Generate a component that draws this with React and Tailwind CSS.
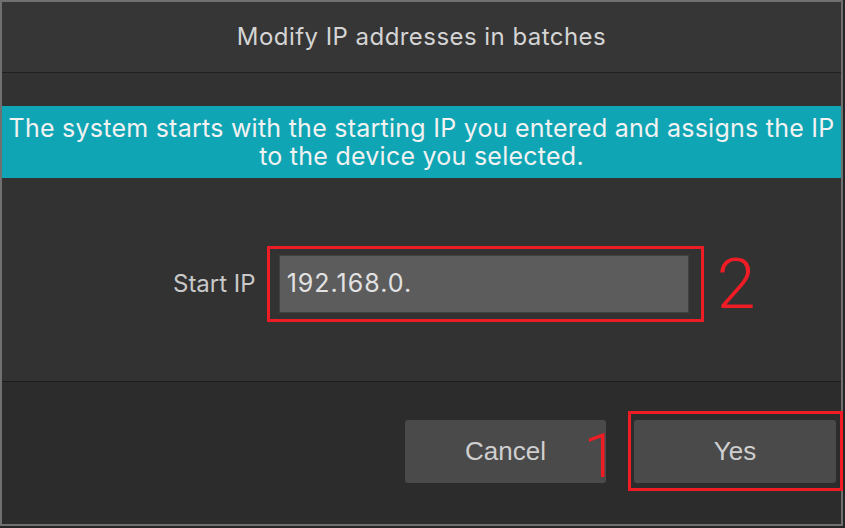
export default function App() {
  return (
    <div className="w-[845px] h-[528px] bg-[#262626] overflow-hidden">
      <div className="w-[843px] h-[526px] border-2 border-[#707070] bg-[#323232] flex flex-col" style={{ fontFamily: 'Inter, Roboto, "Noto Sans", sans-serif' }}>
        <div className="h-[71px] shrink-0 bg-[#363636] border-b border-[#1f1f1f] flex items-center justify-center">
          <span className="text-[24px] text-[#d4d4d4] tracking-[0.45px]">Modify IP addresses in batches</span>
        </div>
        <div className="h-[308px] shrink-0 pt-[33px] flex flex-col">
          <div className="h-[72px] bg-[#0fa5b4] flex flex-col items-center justify-center text-[25px] leading-[28px] text-[#f2f2f2] tracking-[0.25px]">
            <span>The system starts with the starting IP you entered and assigns the IP</span>
            <span>to the device you selected.</span>
          </div>
          <div className="mt-[68px] flex items-center pl-[171px]">
            <span className="text-[24px] text-[#c9c9c9]">Start IP</span>
            <div className="ml-[11px] border-[3px] border-[#ee1c25] pl-[9px] pr-[12px] py-[6px]">
              <div className="w-[410px] h-[58px] bg-[#5c5c5c] border border-[#404040] flex items-center pl-[7px]">
                <span className="text-[25px] text-[#e2e2e2] tracking-[1px]">192.168.0.</span>
              </div>
            </div>
            <span className="ml-[13px] text-[70px] leading-none text-[#ee1c25] font-light" style={{ fontFamily: 'Roboto, sans-serif' }}>2</span>
          </div>
        </div>
        <div className="flex-1 bg-[#2c2c2c] border-t border-[#1c1c1c] flex items-center justify-end pb-[4px]">
          <div className="relative">
            <button className="w-[201px] h-[63px] rounded-[3px] bg-[#4a4a4a] text-[26px] text-[#cfcfcf]" style={{ fontFamily: '"Liberation Sans", Arial, sans-serif' }}>Cancel</button>
            <span className="absolute right-[-12px] top-[5px] text-[62px] leading-none text-[#ee1c25] font-light" style={{ fontFamily: 'Roboto, sans-serif' }}>1</span>
          </div>
          <div className="ml-[22px] mr-[-2px] border-[3px] border-[#ee1c25] pl-[3px] pr-[4px] pt-[6px] pb-[5px]">
            <button className="w-[202px] h-[63px] rounded-[3px] bg-[#4a4a4a] text-[26px] text-[#cfcfcf]" style={{ fontFamily: '"Liberation Sans", Arial, sans-serif' }}>Yes</button>
          </div>
        </div>
      </div>
    </div>
  );
}
